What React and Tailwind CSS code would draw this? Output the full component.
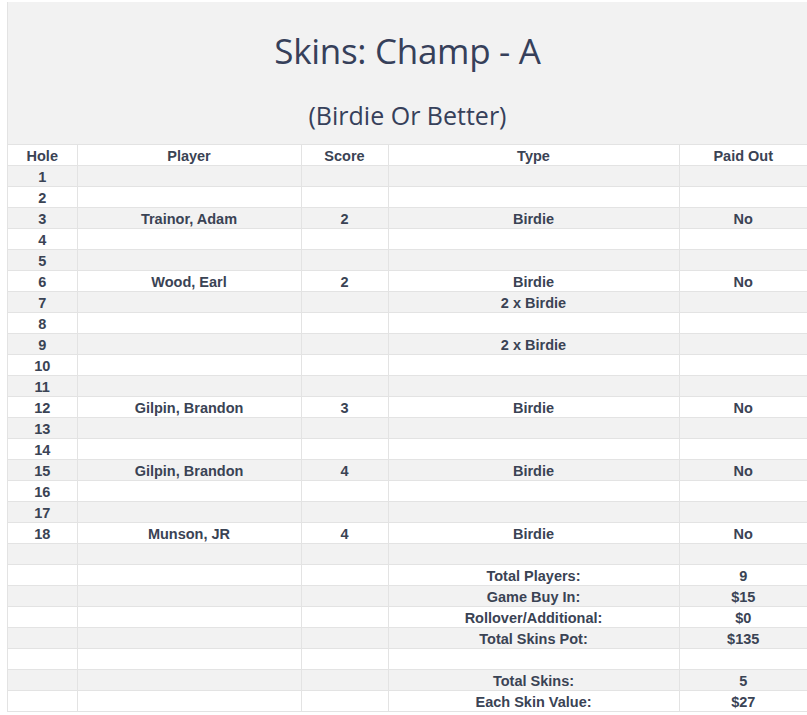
const holes = [
  { hole: 1 },
  { hole: 2 },
  { hole: 3, player: 'Trainor, Adam', score: '2', type: 'Birdie', paid: 'No' },
  { hole: 4 },
  { hole: 5 },
  { hole: 6, player: 'Wood, Earl', score: '2', type: 'Birdie', paid: 'No' },
  { hole: 7, type: '2 x Birdie' },
  { hole: 8 },
  { hole: 9, type: '2 x Birdie' },
  { hole: 10 },
  { hole: 11 },
  { hole: 12, player: 'Gilpin, Brandon', score: '3', type: 'Birdie', paid: 'No' },
  { hole: 13 },
  { hole: 14 },
  { hole: 15, player: 'Gilpin, Brandon', score: '4', type: 'Birdie', paid: 'No' },
  { hole: 16 },
  { hole: 17 },
  { hole: 18, player: 'Munson, JR', score: '4', type: 'Birdie', paid: 'No' },
  {},
  { type: 'Total Players:', paid: '9' },
  { type: 'Game Buy In:', paid: '$15' },
  { type: 'Rollover/Additional:', paid: '$0' },
  { type: 'Total Skins Pot:', paid: '$135' },
  {},
  { type: 'Total Skins:', paid: '5' },
  { type: 'Each Skin Value:', paid: '$27' },
]

function Cell({ children, last }) {
  return (
    <td className={`h-[21px] p-0 pt-[2px] text-center leading-[18px] border-b border-[#e3e3e3] ${last ? '' : 'border-r'}`}>
      {children}
    </td>
  )
}

export default function App() {
  return (
    <div className="min-h-screen bg-white pt-[2px] pl-[7px]">
      <div className="w-[800px] border-l border-[#e3e3e3]">

        {/* Title */}
        <div className="h-[142px] bg-[#f2f2f2] flex flex-col items-center text-[#36405a]" style={{ fontFamily: '"Open Sans", sans-serif' }}>
          <h1 className="mt-[24px] text-[35px] leading-[50px] font-normal tracking-[-0.3px]">Skins: Champ - A</h1>
          <p className="mt-[21px] text-[25px] leading-[36px]">(Birdie Or Better)</p>
        </div>

        {/* Table */}
        <table
          className="w-full border-collapse table-fixed text-[14.5px] font-bold text-[#3a4354] border-t border-[#e3e3e3]"
          style={{ fontFamily: '"Liberation Sans", Arial, sans-serif' }}
        >
          <colgroup>
            <col className="w-[69px]" />
            <col className="w-[224px]" />
            <col className="w-[87px]" />
            <col className="w-[291px]" />
            <col />
          </colgroup>
          <thead>
            <tr className="bg-white">
              <Cell>Hole</Cell>
              <Cell>Player</Cell>
              <Cell>Score</Cell>
              <Cell>Type</Cell>
              <Cell last>Paid Out</Cell>
            </tr>
          </thead>
          <tbody>
            {holes.map((r, i) => (
              <tr key={i} className={i % 2 === 0 ? 'bg-[#f2f2f2]' : 'bg-white'}>
                <Cell>{r.hole}</Cell>
                <Cell>{r.player}</Cell>
                <Cell>{r.score}</Cell>
                <Cell>{r.type}</Cell>
                <Cell last>{r.paid}</Cell>
              </tr>
            ))}
          </tbody>
        </table>
      </div>
    </div>
  )
}
